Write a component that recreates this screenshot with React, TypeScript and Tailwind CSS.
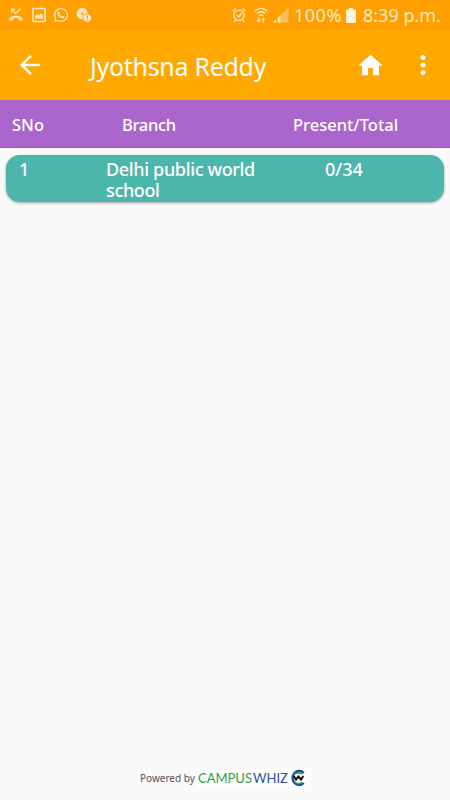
import { FaWhatsapp } from "react-icons/fa"
import { MdArrowBack, MdHome, MdMoreVert } from "react-icons/md"

type Branch = {
  sno: number
  name: string
  present: number
  total: number
}

const branches: Branch[] = [
  { sno: 1, name: "Delhi public world school", present: 0, total: 34 },
]

function MissedCallIcon() {
  return (
    <svg className="w-4 h-4" viewBox="0 0 16 16" fill="none" stroke="currentColor">
      <path d="M4 2.500 7.700 6.200 12.700 1.800M3.700 5.500V2.300H7" strokeWidth="1.500" />
      <path d="M0.800 11.800C4.500 7.900 11.500 7.900 15.200 11.800L13 14.300 10.500 12.500V11C9 10.500 7 10.500 5.500 11V12.500L3 14.300Z" fill="currentColor" stroke="none" />
    </svg>
  )
}

function PictureIcon() {
  return (
    <svg className="w-[14px] h-4" viewBox="0 0 14 16" fill="none" stroke="currentColor">
      <rect x="1" y="1.500" width="12" height="13" rx="0.500" strokeWidth="1.700" />
      <path d="M3 11.500V9L5 7 6.700 8.500 9 6.300 11 8.500V11.500Z" fill="currentColor" stroke="none" />
    </svg>
  )
}

function DiscAlertIcon() {
  return (
    <svg className="w-4 h-4" viewBox="0 0 16 16">
      <circle cx="6.200" cy="6.700" r="5.700" fill="currentColor" />
      <circle cx="6.200" cy="6.700" r="1.200" fill="#ff9f00" />
      <circle cx="11.300" cy="11" r="4.300" fill="currentColor" stroke="#ff9f00" strokeWidth="0.900" />
      <path d="M11.300 8.300V11.600M11.300 12.500V13.800" stroke="#ff9f00" strokeWidth="1.300" />
    </svg>
  )
}

function AlarmIcon() {
  return (
    <svg className="w-[14px] h-4" viewBox="0 0 14 16" fill="none" stroke="currentColor" strokeWidth="1.300">
      <circle cx="7" cy="8.300" r="5.200" />
      <path d="M4.600 8 6.500 10 9.700 6.300M0.600 4.200 3.700 1.500M13.400 4.200 10.300 1.500M3.500 12.500 2 14.800M10.500 12.500 12 14.800" />
    </svg>
  )
}

function WifiIcon() {
  return (
    <svg className="w-[14px] h-4" viewBox="0 0 14 16" fill="none" stroke="currentColor" strokeWidth="1.400">
      <path d="M0.800 4.200C4.500 0.400 9.500 0.400 13.200 4.200M3 6.500C5.500 4.200 8.500 4.200 11 6.500M5 8.800C6.300 7.700 7.700 7.700 9 8.800" />
      <path d="M4.700 15.500 2.500 13H4V10.500H5.400V13H6.900ZM9.300 10.500 11.500 13H10V15.500H8.600V13H7.100Z" fill="currentColor" stroke="none" />
    </svg>
  )
}

function SignalIcon() {
  return (
    <svg className="w-4 h-4" viewBox="0 0 16 16" fill="currentColor">
      <path d="M0.500 15.500V14.500L3 12.300V15.500ZM4.500 15.500V10.800L7.500 8V15.500Z" />
      <path d="M7.500 15.500V8L15.500 0.500V15.500Z" opacity="0.450" />
    </svg>
  )
}

function StatusBar() {
  return (
    <div className="flex h-[30px] items-center bg-[#ff9f00] text-[#ffe9c4]">
      <div className="flex flex-1 items-center pl-2">
        <MissedCallIcon />
        <div className="ml-2"><PictureIcon /></div>
        <FaWhatsapp className="ml-[7px] h-4 w-4" />
        <div className="ml-[7px]"><DiscAlertIcon /></div>
      </div>
      <div className="flex items-center whitespace-nowrap text-[18px]">
        <AlarmIcon />
        <div className="ml-2"><WifiIcon /></div>
        <div className="ml-[5px]"><SignalIcon /></div>
        <span className="ml-[5px] w-[48px] tracking-[0.5px]">100%</span>
        <svg className="ml-[4px] h-[15px] w-[10px]" viewBox="0 0 10 15" fill="#fff3dc">
          <path d="M3 0H7V1.500H10V15H0V1.500H3Z" />
        </svg>
        <span className="ml-[7px] w-[87px]">8:39 p.m.</span>
      </div>
    </div>
  )
}

function Toolbar() {
  return (
    <header className="flex h-[70px] items-center bg-[#ffa900] text-white">
      <MdArrowBack className="ml-[15px] h-[30px] w-[30px]" />
      <h1 className="ml-[45px] flex-1 whitespace-nowrap pt-[2px] text-[25px] leading-none tracking-[-0.3px]">Jyothsna Reddy</h1>
      <MdHome className="h-[29px] w-[29px]" />
      <MdMoreVert className="ml-[23px] mr-[12px] h-[30px] w-[30px]" />
    </header>
  )
}

function BrandMark() {
  return (
    <svg className="h-[18px] w-4" viewBox="0 0 16 18" fill="none">
      <path d="M13.800 4A6.600 7 0 1 0 13.800 14" stroke="#144b9f" strokeWidth="2.300" />
      <path d="M4.500 5.200C6.500 3.700 10 3.700 12 5.200M4.500 13.200C7 15 10 15 12 13.200" stroke="#25a24c" strokeWidth="1.500" />
      <path d="M3.700 7 6 10.500 8.500 7.500 11 10.500 13.300 7" stroke="#111" strokeWidth="2" />
    </svg>
  )
}

export default function App() {
  return (
    <div className="flex h-screen w-full flex-col overflow-hidden bg-[#fafafa] font-['Noto_Sans',sans-serif]">
      <StatusBar />
      <Toolbar />
      <div className="flex h-12 items-center border-b border-[#a257c8] bg-[#aa66cc] pt-[3px] text-[16.5px] font-medium text-white">
        <span className="w-[110px] pl-3">SNo</span>
        <span className="w-[171px] pl-3 tracking-[-0.3px]">Branch</span>
        <span className="pl-3">Present/Total</span>
      </div>
      <main className="flex-1 px-[6px] pt-[7px]">
        {branches.map((b) => (
          <div key={b.sno} className="flex h-[47px] rounded-[14px] bg-[#4db6ac] pt-1 text-[18px] font-medium leading-[21px] tracking-[-0.35px] text-white shadow-[0_1px_3px_rgba(0,0,0,0.35)]">
            <span className="w-[100px] pl-[13px]">{b.sno}</span>
            <span className="w-[160px]">{b.name}</span>
            <span className="pl-[59px] tracking-normal">{b.present}/{b.total}</span>
          </div>
        ))}
      </main>
      <footer className="flex h-[44px] items-center pl-[140px] text-[10px] text-[#555]">
        <span className="w-[57px] whitespace-nowrap">Powered by</span>
        <div className="flex items-center bg-white pl-px font-['Lato',sans-serif] text-[13px] leading-none">
          <span className="w-[55px] text-[#25a24c]">CAMPUS</span>
          <span className="w-[37px] text-[#2d5299]">WHIZ</span>
          <BrandMark />
        </div>
      </footer>
    </div>
  )
}
